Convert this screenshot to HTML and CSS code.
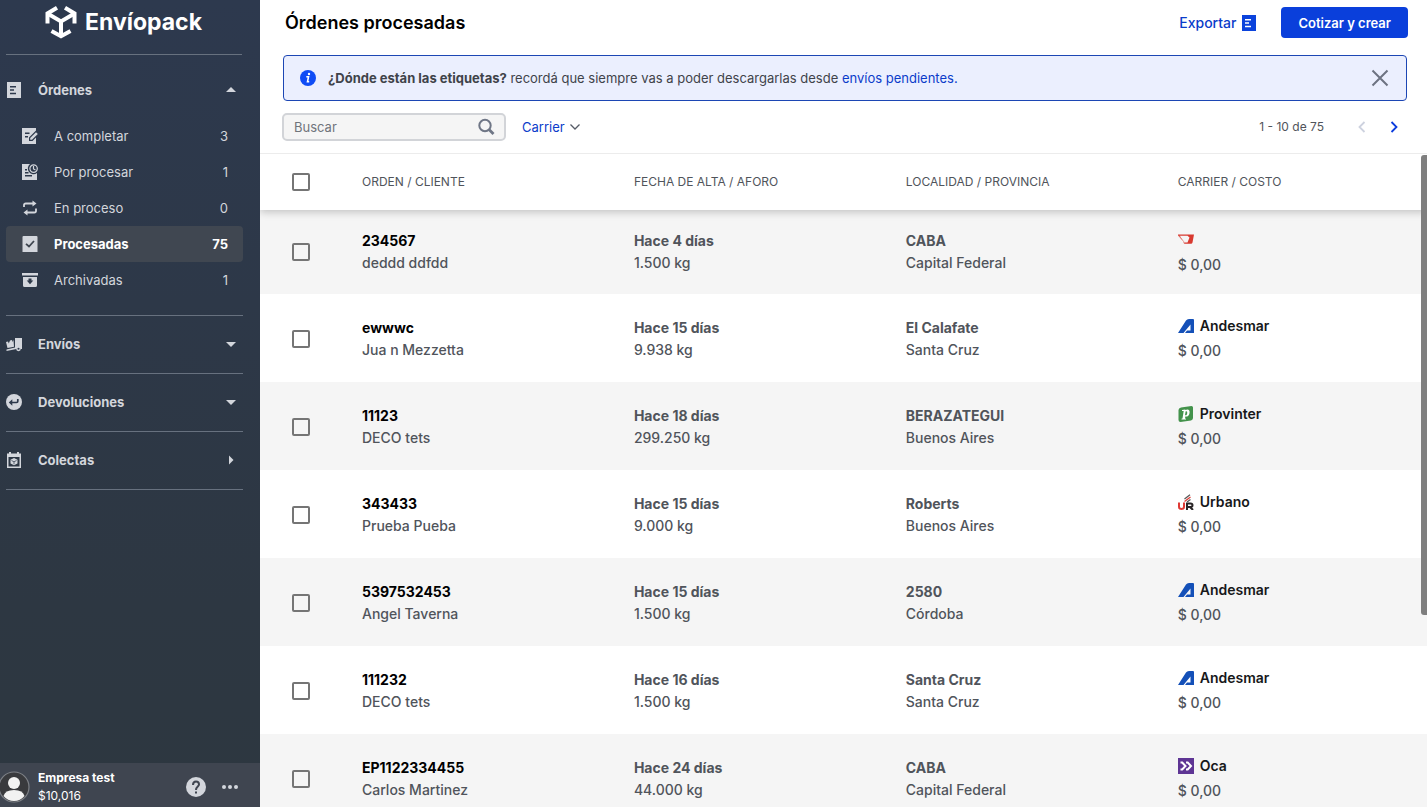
FILE: index.html
```html
<!DOCTYPE html>
<html lang="es">
<head>
<meta charset="utf-8">
<meta name="viewport" content="width=device-width, initial-scale=1">
<title>Envíopack - Órdenes procesadas</title>
<link rel="stylesheet" href="styles.css">
</head>
<body>
<svg class="sprite" aria-hidden="true">
  <symbol id="i-doc" viewBox="0 0 14 16"><path fill="currentColor" fill-rule="evenodd" d="M0 0h14v16H0zM3 4v1.500h6V4zM3 7.300v1.500h4V7.300zM3 10.700v1.500h6v-1.500z"/></symbol>
  <symbol id="i-andesmar" viewBox="0 0 16 14"><path fill="#1450b8" d="M0 14L8 1.500Q9 0 11 0H15Q16 0 16 1V14H7L9 11.500H12.500V5.500L5.500 14z"/></symbol>
</svg>
<div class="app">
  <aside class="sidebar">
    <a class="brand" href="#">
      <svg class="brand-mark" viewBox="0 0 32 34" aria-hidden="true"><g fill="none" stroke="#fff" stroke-width="4"><path d="M12 2.800 2.500 8.500V18.500"/><path d="M20 2.800 29.500 8.500V18.500"/><path d="M2.500 8.500l13.500 8 13.500-8"/><path d="M16 16v15"/><path d="M6.500 26 16 31.300l9.500-5.300"/></g></svg>
      <span>Envíopack</span>
    </a>
    <nav class="nav">
      <section class="group group-open">
        <button class="group-head" type="button" aria-expanded="true">
          <svg class="ico-doc" viewBox="0 0 14 16"><use href="#i-doc"/></svg>
          <span class="grow">Órdenes</span>
          <svg class="caret" viewBox="0 0 10 10"><path fill="currentColor" d="M0 7l5-5 5 5z"/></svg>
        </button>
        <ul class="items">
          <li><a class="item" href="#"><svg class="ico" viewBox="0 0 16 16"><path fill="currentColor" fill-rule="evenodd" d="M0 0h14v2.500L7 9.500V13h3.500L14 9.500V16H0zM3 4.500V6h4.500V4.500zM3 8v1.500h3V8z"/><path fill="currentColor" d="M8.200 10 14 4.200l1.800 1.800L10 11.800H8.200z"/></svg><span class="grow">A completar</span><span>3</span></a></li>
          <li><a class="item" href="#"><svg class="ico" viewBox="0 0 16 16"><path fill="currentColor" fill-rule="evenodd" d="M0 0h8a5.500 5.500 0 0 0 7 9v7H0zM3 5v1.500h2V5zM3 8v1.500h3.500V8zM3 11v1.500h7V11z"/><circle cx="11.600" cy="4.600" r="3.700" fill="#2d394b" stroke="currentColor" stroke-width="1.200"/><path fill="none" stroke="currentColor" stroke-width="1.200" d="M11.500 2v3l2 1"/></svg><span class="grow">Por procesar</span><span>1</span></a></li>
          <li><a class="item" href="#"><svg class="ico" viewBox="0 0 16 16"><g fill="none" stroke="currentColor" stroke-width="1.800"><path d="M2 7V5Q2 3.500 3.700 3.500H12M14 8.500v2.500Q14 12.500 12.300 12.500H4"/></g><path fill="currentColor" d="M10.500.5l4 3-4 3zM5.500 9.500l-4 3 4 3z"/></svg><span class="grow">En proceso</span><span>0</span></a></li>
          <li><a class="item item-active" href="#" aria-current="page"><svg class="ico" viewBox="0 0 16 16"><path fill="currentColor" d="M.5 1Q.5 0 1.500 0h13q1 0 1 1v15H.5z"/><path fill="none" stroke="#3f4650" stroke-width="1.800" d="M4 7.800 7 10.500 12 5"/></svg><span class="grow">Procesadas</span><span>75</span></a></li>
          <li><a class="item" href="#"><svg class="ico" viewBox="0 0 16 16"><path fill="currentColor" fill-rule="evenodd" d="M0 1h16v2.500H0zM1 5h14v8.500q0 1.500-1.500 1.500h-11Q1 15 1 13.500zM6.500 6.500v2H4.700L8 12.300l3.300-3.800H9.500v-2z"/></svg><span class="grow">Archivadas</span><span>1</span></a></li>
        </ul>
      </section>
      <button class="group group-head" type="button" aria-expanded="false">
        <svg class="ico" viewBox="0 0 16 16"><path fill="currentColor" d="M9 2h7v11h-1.500a2.200 2.200 0 0 0-4 0L.5 15V13.500L9 11.500zM0 6l2-.5.8 2 1.200-3 2-.4.700 2 .8-2.300.5 7L1.500 12z"/><circle cx="12.500" cy="12.800" r="1.700" fill="#2d394b" stroke="currentColor" stroke-width="1.300"/></svg>
        <span class="grow">Envíos</span>
        <svg class="caret" viewBox="0 0 10 10"><path fill="currentColor" d="M0 3l5 5 5-5z"/></svg>
      </button>
      <button class="group group-head" type="button" aria-expanded="false">
        <svg class="ico" viewBox="0 0 16 16"><circle cx="8" cy="8" r="8" fill="currentColor"/><path fill="none" stroke="#2d394b" stroke-width="1.700" d="M11.800 5v2.300q0 1.200-1.200 1.200H5"/><path fill="#2d394b" d="M6.300 5.300v6.400L2.800 8.500z"/></svg>
        <span class="grow">Devoluciones</span>
        <svg class="caret" viewBox="0 0 10 10"><path fill="currentColor" d="M0 3l5 5 5-5z"/></svg>
      </button>
      <button class="group group-head" type="button">
        <svg class="ico" viewBox="0 0 16 16"><path fill="currentColor" fill-rule="evenodd" d="M3 0h2v1.500h6V0h2v1.500h2V16H1V1.500h2zM2.500 5v9.500h11V5z"/><path fill="currentColor" d="M8 6l3.500 1.800v3.700L8 13.300l-3.500-1.800V7.800z"/><path fill="none" stroke="#2d394b" stroke-width=".7" d="M5.500 8.500l2.500 1.300 2.500-1.300M8 9.800v2.500"/></svg>
        <span class="grow">Colectas</span>
        <svg class="caret" viewBox="0 0 10 10"><path fill="currentColor" d="M3 .5l4.500 4.500L3 9.500z"/></svg>
      </button>
    </nav>
    <footer class="account">
      <svg class="avatar" viewBox="0 0 32 32" role="img" aria-label="Usuario"><circle cx="16" cy="16" r="15" fill="#393a3d" stroke="#7d8086" stroke-width="1.200"/><circle cx="16" cy="12" r="6" fill="#f2f2f2"/><path fill="#f2f2f2" d="M5.500 25q1.500-6 10.500-6t10.500 6q-4 5-10.500 5T5.500 25z"/></svg>
      <div class="account-info"><strong>Empresa test</strong><span>$10,016</span></div>
      <button class="icon-btn" type="button" aria-label="Ayuda"><svg width="20" height="20" viewBox="0 0 20 20"><circle cx="10" cy="10" r="10" fill="#d3d6dc"/><path fill="none" stroke="#3f4550" stroke-width="2" d="M7 8q0-3.500 3-3.500T13 7.500C13 9.500 10 9.700 10 13"/><path fill="#3f4550" d="M9 14.500h2v2H9z"/></svg></button>
      <button class="icon-btn" type="button" aria-label="Más opciones"><svg width="16" height="16" viewBox="0 0 16 16" fill="#d3d6dc"><circle cx="2" cy="8" r="2"/><circle cx="8" cy="8" r="2"/><circle cx="14" cy="8" r="2"/></svg></button>
    </footer>
  </aside>

  <main class="main">
    <header class="topbar">
      <h1>Órdenes procesadas</h1>
      <button class="export" type="button">Exportar <svg class="ico-doc" viewBox="0 0 14 16"><use href="#i-doc"/></svg></button>
      <button class="primary" type="button">Cotizar y crear</button>
    </header>
    <div class="notice" role="status">
      <svg width="16" height="16" viewBox="0 0 16 16" aria-hidden="true"><circle cx="8" cy="8" r="8" fill="#0f4cf5"/><circle cx="9" cy="4" r="1.200" fill="#fff"/><path fill="none" stroke="#fff" stroke-width="1.600" d="M6.300 6.800h2.200l-1 5h1.700"/></svg>
      <p><strong>¿Dónde están las etiquetas?</strong> recordá que siempre vas a poder descargarlas desde <a href="#">envíos pendientes.</a></p>
      <button class="icon-btn" type="button" aria-label="Cerrar"><svg width="18" height="18" viewBox="0 0 18 18"><path fill="none" stroke="#6d7382" stroke-width="2" d="M1.500 1.500l15 15m0-15l-15 15"/></svg></button>
    </div>
    <div class="filters">
      <div class="search">
        <input type="text" placeholder="Buscar" aria-label="Buscar">
        <button class="icon-btn" type="button" aria-label="Buscar órdenes"><svg width="18" height="18" viewBox="0 0 18 18"><g fill="none" stroke="#6f7686"><circle cx="8" cy="7.500" r="5.700" stroke-width="2"/><path stroke-width="2.800" d="M12 11.500l4.500 4.500"/></g></svg></button>
      </div>
      <button class="dropdown" type="button" aria-haspopup="listbox">Carrier <svg width="10" height="6" viewBox="0 0 10 6"><path fill="none" stroke="#555b66" stroke-width="1.300" d="M.5.500L5 5 9.500.500"/></svg></button>
      <span class="range">1 - 10 de 75</span>
      <button class="icon-btn" type="button" aria-label="Anterior" disabled><svg width="8" height="12" viewBox="0 0 8 12"><path fill="none" stroke="#cdd2df" stroke-width="1.800" d="M6.500 1L1.500 6l5 5"/></svg></button>
      <button class="icon-btn" type="button" aria-label="Siguiente"><svg width="8" height="12" viewBox="0 0 8 12"><path fill="none" stroke="#0b3cdd" stroke-width="1.800" d="M1.500 1l5 5-5 5"/></svg></button>
    </div>
    <div class="orders">
      <div class="scroller">
      <table>
        <colgroup><col class="col-check"><col class="col"><col class="col"><col class="col"><col></colgroup>
        <thead><tr>
          <th><input class="check" type="checkbox" aria-label="Seleccionar todas"></th>
          <th>ORDEN / CLIENTE</th><th>FECHA DE ALTA / AFORO</th><th>LOCALIDAD / PROVINCIA</th><th>CARRIER / COSTO</th>
        </tr></thead>
        <tbody>
          <tr><td><input class="check" type="checkbox" aria-label="Orden 234567"></td><td><b class="order">234567</b>deddd ddfdd</td><td><b>Hace 4 días</b>1.500 kg</td><td><b>CABA</b>Capital Federal</td>
            <td><span class="carrier"><svg class="carrier-ico" viewBox="0 1 16 16" role="img" aria-label="Correo"><path fill="#d83a30" fill-rule="evenodd" d="M0 3.500h16l-1.500 8q-.3 1.300-1.500 1.300H6.500L5 11.500h4.500l2-5-2-1.800H1.800L5 10 0 4.500z"/><path fill="none" stroke="#e58a84" stroke-width=".8" d="M1 4.500L6 11"/></svg></span>$ 0,00</td></tr>
          <tr><td><input class="check" type="checkbox" aria-label="Orden ewwwc"></td><td><b class="order">ewwwc</b>Jua n Mezzetta</td><td><b>Hace 15 días</b>9.938 kg</td><td><b>El Calafate</b>Santa Cruz</td>
            <td><span class="carrier"><svg class="carrier-ico" viewBox="0 0 16 14"><use href="#i-andesmar"/></svg>Andesmar</span>$ 0,00</td></tr>
          <tr><td><input class="check" type="checkbox" aria-label="Orden 11123"></td><td><b class="order">11123</b>DECO tets</td><td><b>Hace 18 días</b>299.250 kg</td><td><b>BERAZATEGUI</b>Buenos Aires</td>
            <td><span class="carrier"><svg class="carrier-ico" viewBox="0 0 16 16"><path fill="#43924b" d="M3 1.500L13.500 0Q15 0 15 1.500V12q0 2-2 2.400L2.500 16Q.5 16 .5 14V4q0-2 2.500-2.500z"/><path fill="#fff" fill-rule="evenodd" d="M4 4l3.300-.6v.7C10 2.500 12.300 4 11.500 7.200 11 10 9.200 11 7.300 10.500L7 12.500l1 .2v.8H3.500v-.8l1-.3L5.700 5H4zM7.600 5.500L7 9.200c1.500.4 2-.7 2.200-2C9.400 5.500 8.800 4.800 7.600 5.500z"/></svg>Provinter</span>$ 0,00</td></tr>
          <tr><td><input class="check" type="checkbox" aria-label="Orden 343433"></td><td><b class="order">343433</b>Prueba Pueba</td><td><b>Hace 15 días</b>9.000 kg</td><td><b>Roberts</b>Buenos Aires</td>
            <td><span class="carrier"><svg class="carrier-ico" viewBox="0 0 16 16"><path fill="none" stroke="#df3a35" stroke-width="2" d="M1 8.500v4.200Q1 15 3.500 15T6 12.700V8.500"/><path fill="none" stroke="#292527" stroke-width="2" d="M9 16V9.500h3.500q2 0 2 1.700T12.500 13H9m3 0l3 3"/><path fill="none" stroke="#555" stroke-width="1.200" d="M6.500 5L12 .8"/><path fill="none" stroke="#df3a35" stroke-width="1.200" d="M6.500 7.500L12.500 3"/><path fill="none" stroke="#555" stroke-width="1.200" d="M9 8l3.500-2.500"/></svg>Urbano</span>$ 0,00</td></tr>
          <tr><td><input class="check" type="checkbox" aria-label="Orden 5397532453"></td><td><b class="order">5397532453</b>Angel Taverna</td><td><b>Hace 15 días</b>1.500 kg</td><td><b>2580</b>Córdoba</td>
            <td><span class="carrier"><svg class="carrier-ico" viewBox="0 0 16 14"><use href="#i-andesmar"/></svg>Andesmar</span>$ 0,00</td></tr>
          <tr><td><input class="check" type="checkbox" aria-label="Orden 111232"></td><td><b class="order">111232</b>DECO tets</td><td><b>Hace 16 días</b>1.500 kg</td><td><b>Santa Cruz</b>Santa Cruz</td>
            <td><span class="carrier"><svg class="carrier-ico" viewBox="0 0 16 14"><use href="#i-andesmar"/></svg>Andesmar</span>$ 0,00</td></tr>
          <tr><td><input class="check" type="checkbox" aria-label="Orden EP1122334455"></td><td><b class="order">EP1122334455</b>Carlos Martinez</td><td><b>Hace 24 días</b>44.000 kg</td><td><b>CABA</b>Capital Federal</td>
            <td><span class="carrier"><svg class="carrier-ico" viewBox="0 0 16 16"><path fill="#5e3594" d="M0 0h16v16H0z"/><path fill="none" stroke="#fff" stroke-width="2" d="M2.500 4.500h1.700L7.500 8l-3.300 3.500H2.500M8 4.500h1.700L13 8l-3.300 3.500H8"/></svg>Oca</span>$ 0,00</td></tr>
        </tbody>
      </table>
      </div>
      <div class="thumb"></div>
    </div>
  </main>
</div>
</body>
</html>
```
FILE: styles.css
```css
* { box-sizing: border-box; }

body {
  margin: 0;
  font: 13px/20px Inter, "Liberation Sans", sans-serif;
  color: #50545b;
  background: #fff;
}

button {
  padding: 0;
  border: 0;
  background: none;
  font: inherit;
  color: inherit;
  cursor: pointer;
}

a { text-decoration: none; }
svg { flex: none; display: block; }
.sprite { position: absolute; width: 0; height: 0; }
.grow { flex: 1; text-align: left; }
.icon-btn { display: flex; }

.app { display: flex; height: 100vh; overflow: hidden; }

/* Sidebar */
.sidebar {
  flex: none;
  width: 260px;
  display: flex;
  flex-direction: column;
  color: #d3d6dc;
  background: linear-gradient(#2d394e, #2d3742 75%, #2d3740);
}

.brand {
  display: flex;
  align-items: center;
  gap: 8px;
  height: 55px;
  margin: 0 18px 0 6px;
  padding: 0 0 10px 39px;
  border-bottom: 1px solid #67717f;
  color: #fff;
  font-size: 23px;
  font-weight: 700;
}

.brand-mark { width: 32px; height: 34px; }

.nav { flex: 1; padding: 0 17px 0 6px; }

.group { border-bottom: 1px solid #67717f; }

.group-head {
  display: flex;
  align-items: center;
  gap: 16px;
  width: 100%;
  height: 58px;
  padding: 0 7px 2px 0;
  font-weight: 700;
}

.group-open { padding: 17px 0; }
.group-open .group-head { height: 36px; margin-bottom: 10px; padding-bottom: 0; }

.ico { width: 16px; height: 16px; }
.ico-doc { width: 14px; height: 16px; margin: 0 1px; }
.caret { width: 10px; height: 10px; }

.items { margin: 0; padding: 0; list-style: none; }

.item {
  display: flex;
  align-items: center;
  gap: 16px;
  height: 36px;
  padding: 0 15px 0 16px;
  border-radius: 4px;
  color: inherit;
}

.item-active { background: #404751; }
.item-active span { color: #fff; font-weight: 700; }

.account {
  display: flex;
  align-items: center;
  gap: 16px;
  height: 44px;
  padding-right: 22px;
  background: #3f4550;
  color: #fff;
  font-size: 12px;
  line-height: 18px;
}

.avatar { width: 32px; height: 32px; margin: 4px -8px 0 -2px; }
.account-info { flex: 1; display: flex; flex-direction: column; padding-top: 4px; }
.account .icon-btn { margin-top: 4px; }

/* Content */
.main { flex: 1; min-width: 0; display: flex; flex-direction: column; }

.topbar {
  display: flex;
  align-items: center;
  gap: 24px;
  padding: 7px 19px 0 25px;
}

h1 { flex: 1; margin: 0; color: #000; font-size: 18px; font-weight: 600; line-height: 30px; }

.export { display: flex; align-items: center; gap: 5px; color: #0b3cca; font-size: 14px; font-weight: 500; }
.export .ico-doc { color: #0b43dc; }

.primary {
  height: 31px;
  padding: 0 17px;
  border-radius: 4px;
  background: #0a3fdb;
  color: #fff;
  font-weight: 600;
}

.notice {
  display: flex;
  align-items: center;
  gap: 12px;
  height: 46px;
  margin: 17px 20px 0 23px;
  padding: 0 17px 0 16px;
  border: 1px solid #1c46b4;
  border-radius: 4px;
  background: #ebeffe;
  color: #3f434a;
}

.notice p { flex: 1; margin: 0; }
.notice a { color: #0b3cca; }

.filters {
  display: flex;
  align-items: center;
  gap: 16px;
  height: 52px;
  padding: 0 29px 0 22px;
}

.search {
  display: flex;
  align-items: center;
  width: 224px;
  height: 28px;
  padding: 0 9px 0 10px;
  border: 2px solid #d2d4d8;
  border-radius: 5px;
  background: #f5f5f5;
}

.search input {
  flex: 1;
  min-width: 0;
  padding: 0;
  border: 0;
  outline: 0;
  background: none;
  font: inherit;
}

.search input::placeholder { color: #70747b; opacity: 1; }

.dropdown { display: flex; align-items: center; gap: 5px; color: #0b3cca; }
.range { margin-left: auto; font-size: 12px; }
.range + .icon-btn { margin: 0 8px 0 18px; }

/* Orders table */
.orders { position: relative; flex: 1; min-height: 0; border-top: 1px solid #ececec; }
.scroller { height: 100%; overflow: hidden; }

.thumb {
  position: absolute;
  top: 1px;
  right: 0;
  z-index: 2;
  width: 6px;
  height: 70.500%;
  border-radius: 3px 0 0 3px;
  background: #7f7f7f;
}

table { width: 100%; border-collapse: collapse; table-layout: fixed; }
.col-check { width: 102px; }
.col { width: 23.300%; }

thead { position: relative; z-index: 1; background: #fff; box-shadow: 0 2px 8px rgba(0, 0, 0, .22); }

th {
  height: 56px;
  padding: 0;
  text-align: left;
  font-size: 12px;
  font-weight: 400;
}

td {
  height: 88px;
  padding: 2px 0 0;
  font-size: 14px;
  font-weight: 500;
  line-height: 22px;
  vertical-align: middle;
}

td:last-child { padding-top: 0; }
th:first-child, td:first-child { padding-left: 32px; }
tbody tr:first-child td { height: 84px; padding-top: 0; }
tbody tr:nth-child(odd) { background: #f5f5f5; }

td b { display: block; font-weight: 700; }
td .order { color: #000; }

.carrier {
  display: flex;
  align-items: center;
  gap: 6px;
  min-height: 22px;
  margin-bottom: 3px;
  color: #17181a;
  font-weight: 600;
}

.carrier-ico { width: 16px; height: 16px; }

.check {
  display: block;
  appearance: none;
  width: 18px;
  height: 18px;
  margin: 0;
  border: 2px solid #757575;
  border-radius: 2px;
  background: #fff;
}

tbody .check { background: none; }
```
